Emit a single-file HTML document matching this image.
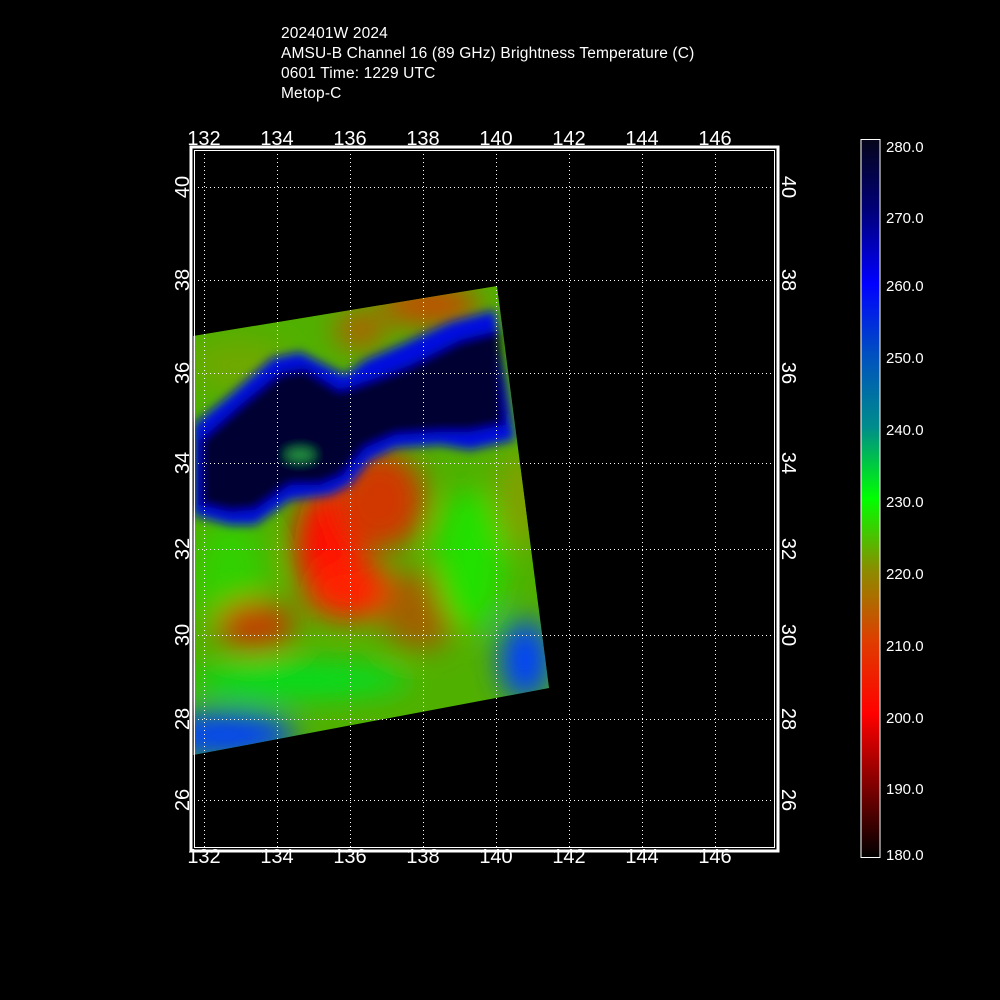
<!DOCTYPE html>
<html><head><style>
html,body{margin:0;padding:0;background:#000;}
body{width:1000px;height:1000px;position:relative;overflow:hidden;font-family:"Liberation Sans",sans-serif;color:#fff;}
.t{position:absolute;left:281px;font-size:15.5px;line-height:20px;letter-spacing:0.15px;}
</style></head><body>
<div class="t" style="top:24px">202401W 2024<br>AMSU-B Channel 16 (89 GHz) Brightness Temperature (C)<br>0601 Time: 1229 UTC<br>Metop-C</div>
<svg width="1000" height="1000" style="position:absolute;left:0;top:0" font-family="Liberation Sans, sans-serif">
<defs>
<clipPath id="sw"><polygon points="193,336 497,286 549,688 193,755"/></clipPath>
<filter id="b1" x="-50%" y="-50%" width="200%" height="200%"><feGaussianBlur stdDeviation="14"/></filter>
<filter id="b2" x="-50%" y="-50%" width="200%" height="200%"><feGaussianBlur stdDeviation="5"/></filter>
<linearGradient id="cb" x1="0" y1="0" x2="0" y2="1">
<stop offset="0" stop-color="#05051a"/>
<stop offset="0.1" stop-color="#00007a"/>
<stop offset="0.2" stop-color="#0000ff"/>
<stop offset="0.3" stop-color="#0050c0"/>
<stop offset="0.4" stop-color="#008c8c"/>
<stop offset="0.5" stop-color="#00ff00"/>
<stop offset="0.6" stop-color="#8c8c00"/>
<stop offset="0.7" stop-color="#e03c00"/>
<stop offset="0.8" stop-color="#ff0000"/>
<stop offset="0.9" stop-color="#800000"/>
<stop offset="1" stop-color="#000"/>
</linearGradient>
</defs>
<g clip-path="url(#sw)">
<rect x="190" y="280" width="370" height="480" fill="#50b000"/>
<g filter="url(#b1)">
<ellipse cx="240" cy="365" rx="50" ry="25" fill="#70a800"/>
<ellipse cx="430" cy="305" rx="50" ry="22" fill="#c05000"/>
<ellipse cx="360" cy="330" rx="25" ry="20" fill="#b06000"/>
<ellipse cx="230" cy="580" rx="35" ry="60" fill="#30d000"/>
<ellipse cx="330" cy="545" rx="35" ry="60" fill="#ff1000"/>
<ellipse cx="380" cy="500" rx="45" ry="50" fill="#d03800"/>
<ellipse cx="350" cy="590" rx="45" ry="30" fill="#ff2000"/>
<ellipse cx="255" cy="625" rx="40" ry="25" fill="#c04000"/>
<ellipse cx="420" cy="610" rx="40" ry="40" fill="#a06000"/>
<ellipse cx="300" cy="680" rx="110" ry="18" fill="#00e020"/>
<ellipse cx="470" cy="560" rx="35" ry="70" fill="#20e000"/>
<ellipse cx="520" cy="500" rx="25" ry="50" fill="#80a000"/>
<ellipse cx="525" cy="660" rx="25" ry="40" fill="#0040ff"/>
<ellipse cx="225" cy="735" rx="70" ry="22" fill="#0040ff"/>
</g>
<g filter="url(#b2)">
<path d="M193,425 L230,395 L272,358 L300,352 L345,375 L365,360 L400,345 L450,322 L495,310 L515,440 L470,450 L440,445 L395,448 L370,460 L350,485 L330,495 L290,500 L255,525 L230,525 L193,515 Z" fill="#0010e0"/>
<path d="M200,440 L240,405 L280,372 L305,368 L340,390 L370,380 L410,365 L460,340 L500,330 L505,425 L470,432 L440,432 L395,435 L365,448 L342,476 L320,485 L290,485 L255,510 L230,512 L200,505 Z" fill="#000530"/>
<ellipse cx="300" cy="455" rx="14" ry="6" fill="#209040"/>
</g>
</g>
<g stroke="#fff" stroke-width="1" stroke-dasharray="1,3" fill="none">
<line x1="204.5" y1="150" x2="204.5" y2="849"/><line x1="277.5" y1="150" x2="277.5" y2="849"/><line x1="350.5" y1="150" x2="350.5" y2="849"/><line x1="423.5" y1="150" x2="423.5" y2="849"/><line x1="496.5" y1="150" x2="496.5" y2="849"/><line x1="569.5" y1="150" x2="569.5" y2="849"/><line x1="642.5" y1="150" x2="642.5" y2="849"/><line x1="715.5" y1="150" x2="715.5" y2="849"/>
<line x1="194" y1="187.5" x2="777" y2="187.5"/><line x1="194" y1="280.5" x2="777" y2="280.5"/><line x1="194" y1="373.5" x2="777" y2="373.5"/><line x1="194" y1="463.5" x2="777" y2="463.5"/><line x1="194" y1="549.5" x2="777" y2="549.5"/><line x1="194" y1="635.5" x2="777" y2="635.5"/><line x1="194" y1="719.5" x2="777" y2="719.5"/><line x1="194" y1="800.5" x2="777" y2="800.5"/>
</g>
<rect x="191" y="147" width="587" height="704" fill="none" stroke="#fff" stroke-width="3"/>
<rect x="194.5" y="150.5" width="580" height="697" fill="none" stroke="#fff" stroke-width="1"/>
<g fill="#fff" font-size="20" text-anchor="middle">
<text x="204" y="145">132</text><text x="277" y="145">134</text><text x="350" y="145">136</text><text x="423" y="145">138</text><text x="496" y="145">140</text><text x="569" y="145">142</text><text x="642" y="145">144</text><text x="715" y="145">146</text>
<text x="204" y="863">132</text><text x="277" y="863">134</text><text x="350" y="863">136</text><text x="423" y="863">138</text><text x="496" y="863">140</text><text x="569" y="863">142</text><text x="642" y="863">144</text><text x="715" y="863">146</text>
<text transform="translate(189,187) rotate(-90)">40</text><text transform="translate(189,280) rotate(-90)">38</text><text transform="translate(189,373) rotate(-90)">36</text><text transform="translate(189,463) rotate(-90)">34</text><text transform="translate(189,549) rotate(-90)">32</text><text transform="translate(189,635) rotate(-90)">30</text><text transform="translate(189,719) rotate(-90)">28</text><text transform="translate(189,800) rotate(-90)">26</text>
<text transform="translate(782,187) rotate(90)">40</text><text transform="translate(782,280) rotate(90)">38</text><text transform="translate(782,373) rotate(90)">36</text><text transform="translate(782,463) rotate(90)">34</text><text transform="translate(782,549) rotate(90)">32</text><text transform="translate(782,635) rotate(90)">30</text><text transform="translate(782,719) rotate(90)">28</text><text transform="translate(782,800) rotate(90)">26</text>
</g>
<rect x="861" y="139.5" width="19" height="718" fill="url(#cb)" stroke="#fff" stroke-width="1"/>
<g fill="#fff" font-size="15">
<text x="886" y="152">280.0</text><text x="886" y="223">270.0</text><text x="886" y="291">260.0</text><text x="886" y="363">250.0</text><text x="886" y="435">240.0</text><text x="886" y="507">230.0</text><text x="886" y="579">220.0</text><text x="886" y="651">210.0</text><text x="886" y="723">200.0</text><text x="886" y="794">190.0</text><text x="886" y="860">180.0</text>
</g>
</svg>
</body></html>
